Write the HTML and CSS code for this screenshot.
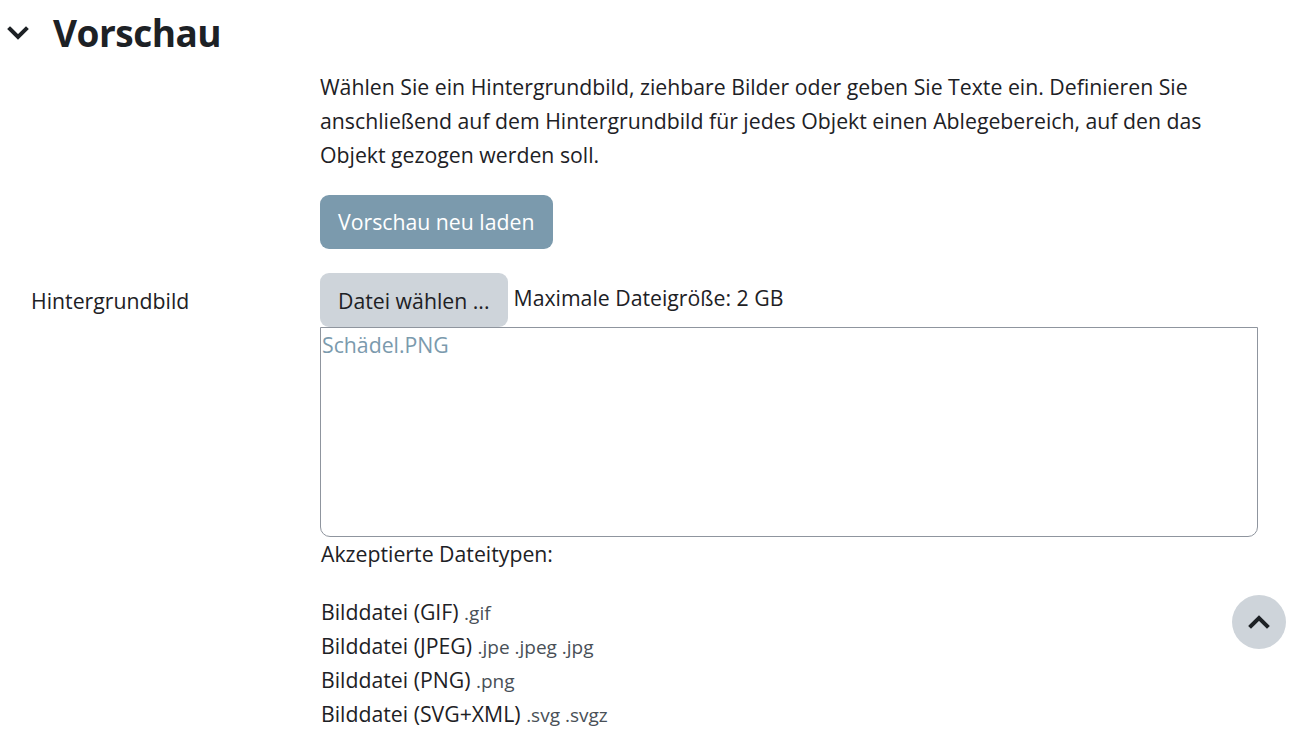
FILE: index.html
```html
<!DOCTYPE html>
<html lang="de">
<head>
<meta charset="utf-8">
<title>Vorschau</title>
<link rel="stylesheet" href="styles.css">
</head>
<body>
<div class="page">
  <div class="section-head">
    <span class="chev">
      <svg width="22" height="14" viewBox="0 0 22 14"><path d="M3 3 L11 11 L19 3" fill="none" stroke="#1d2125" stroke-width="4" stroke-linecap="square"/></svg>
    </span>
    <h3 class="title">Vorschau</h3>
  </div>

  <div class="row">
    <div class="label"></div>
    <div class="content">
      <p class="intro">Wählen Sie ein Hintergrundbild, ziehbare Bilder oder geben Sie Texte ein. Definieren Sie anschließend auf dem Hintergrundbild für jedes Objekt einen Ablegebereich, auf den das Objekt gezogen werden soll.</p>
      <button class="btn-primary">Vorschau neu laden</button>
    </div>
  </div>

  <div class="row row-file">
    <div class="label file-label">Hintergrundbild</div>
    <div class="content">
      <div class="picker">
        <button class="btn-secondary">Datei wählen ...</button>
        <span class="maxsize">Maximale Dateigröße: 2 GB</span>
      </div>
      <div class="filebox"><a class="filename">Schädel.PNG</a></div>
      <div class="accepted">Akzeptierte Dateitypen:</div>
      <ul class="types">
        <li>Bilddatei (GIF) <small>.gif</small></li>
        <li>Bilddatei (JPEG) <small>.jpe .jpeg .jpg</small></li>
        <li>Bilddatei (PNG) <small>.png</small></li>
        <li>Bilddatei (SVG+XML) <small>.svg .svgz</small></li>
      </ul>
    </div>
  </div>

  <button class="to-top" aria-label="Nach oben">
    <svg width="22" height="14" viewBox="0 0 22 14"><path d="M3 11 L11 3 L19 11" fill="none" stroke="#1d2125" stroke-width="4" stroke-linecap="square"/></svg>
  </button>
</div>
</body>
</html>
```
FILE: styles.css
```css
* { box-sizing: border-box; }
body {
  margin: 0;
  font-family: "Open Sans", "Noto Sans", sans-serif;
  font-size: 21.25px;
  line-height: 34px;
  color: #1d2125;
  background: #fff;
  overflow: hidden;
}
.page { position: relative; height: 747px; }
.section-head {
  display: flex;
  align-items: center;
  height: 66px;
  padding-left: 7px;
}
.chev { display: flex; width: 46px; }
.title {
  margin: 0;
  font-size: 37px;
  font-weight: 700;
  line-height: 46px;
  letter-spacing: -0.5px;
}
.row {
  display: grid;
  grid-template-columns: 320px 938px;
}
.label { padding-left: 31px; }
.content { min-width: 0; }
.intro { margin: 4px 0 23px; }
button { font-family: inherit; font-size: inherit; cursor: pointer; }
.btn-primary {
  display: block;
  height: 54px;
  padding: 0 18px;
  border: 0;
  border-radius: 9px;
  background: #7b9aad;
  color: #fff;
  line-height: 34px;
}
.row-file { margin-top: 24px; }
.file-label { padding-top: 11px; }
.picker { display: flex; align-items: center; }
.btn-secondary {
  height: 54px;
  padding: 0 18px;
  border: 0;
  border-radius: 9px;
  background: #ced4da;
  color: #1d2125;
  margin-right: 6px;
}
.maxsize { margin-top: -5px; }
.filebox {
  height: 210px;
  border: 1px solid #8f959e;
  border-radius: 0 0 10px 10px;
  padding: 0 1px;
}
.filename { color: #7b9aad; }
.accepted { margin-left: 1px; }
.types {
  list-style: none;
  margin: 24px 0 0;
  padding: 0 0 0 1px;
}
.types li { height: 34px; }
.types small { font-size: 19px; line-height: 1; color: #495057; }
.to-top {
  position: absolute;
  left: 1232px;
  top: 595px;
  width: 54px;
  height: 54px;
  border: 0;
  border-radius: 50%;
  background: #ced4da;
  display: flex;
  align-items: center;
  justify-content: center;
  padding: 0;
}
```
